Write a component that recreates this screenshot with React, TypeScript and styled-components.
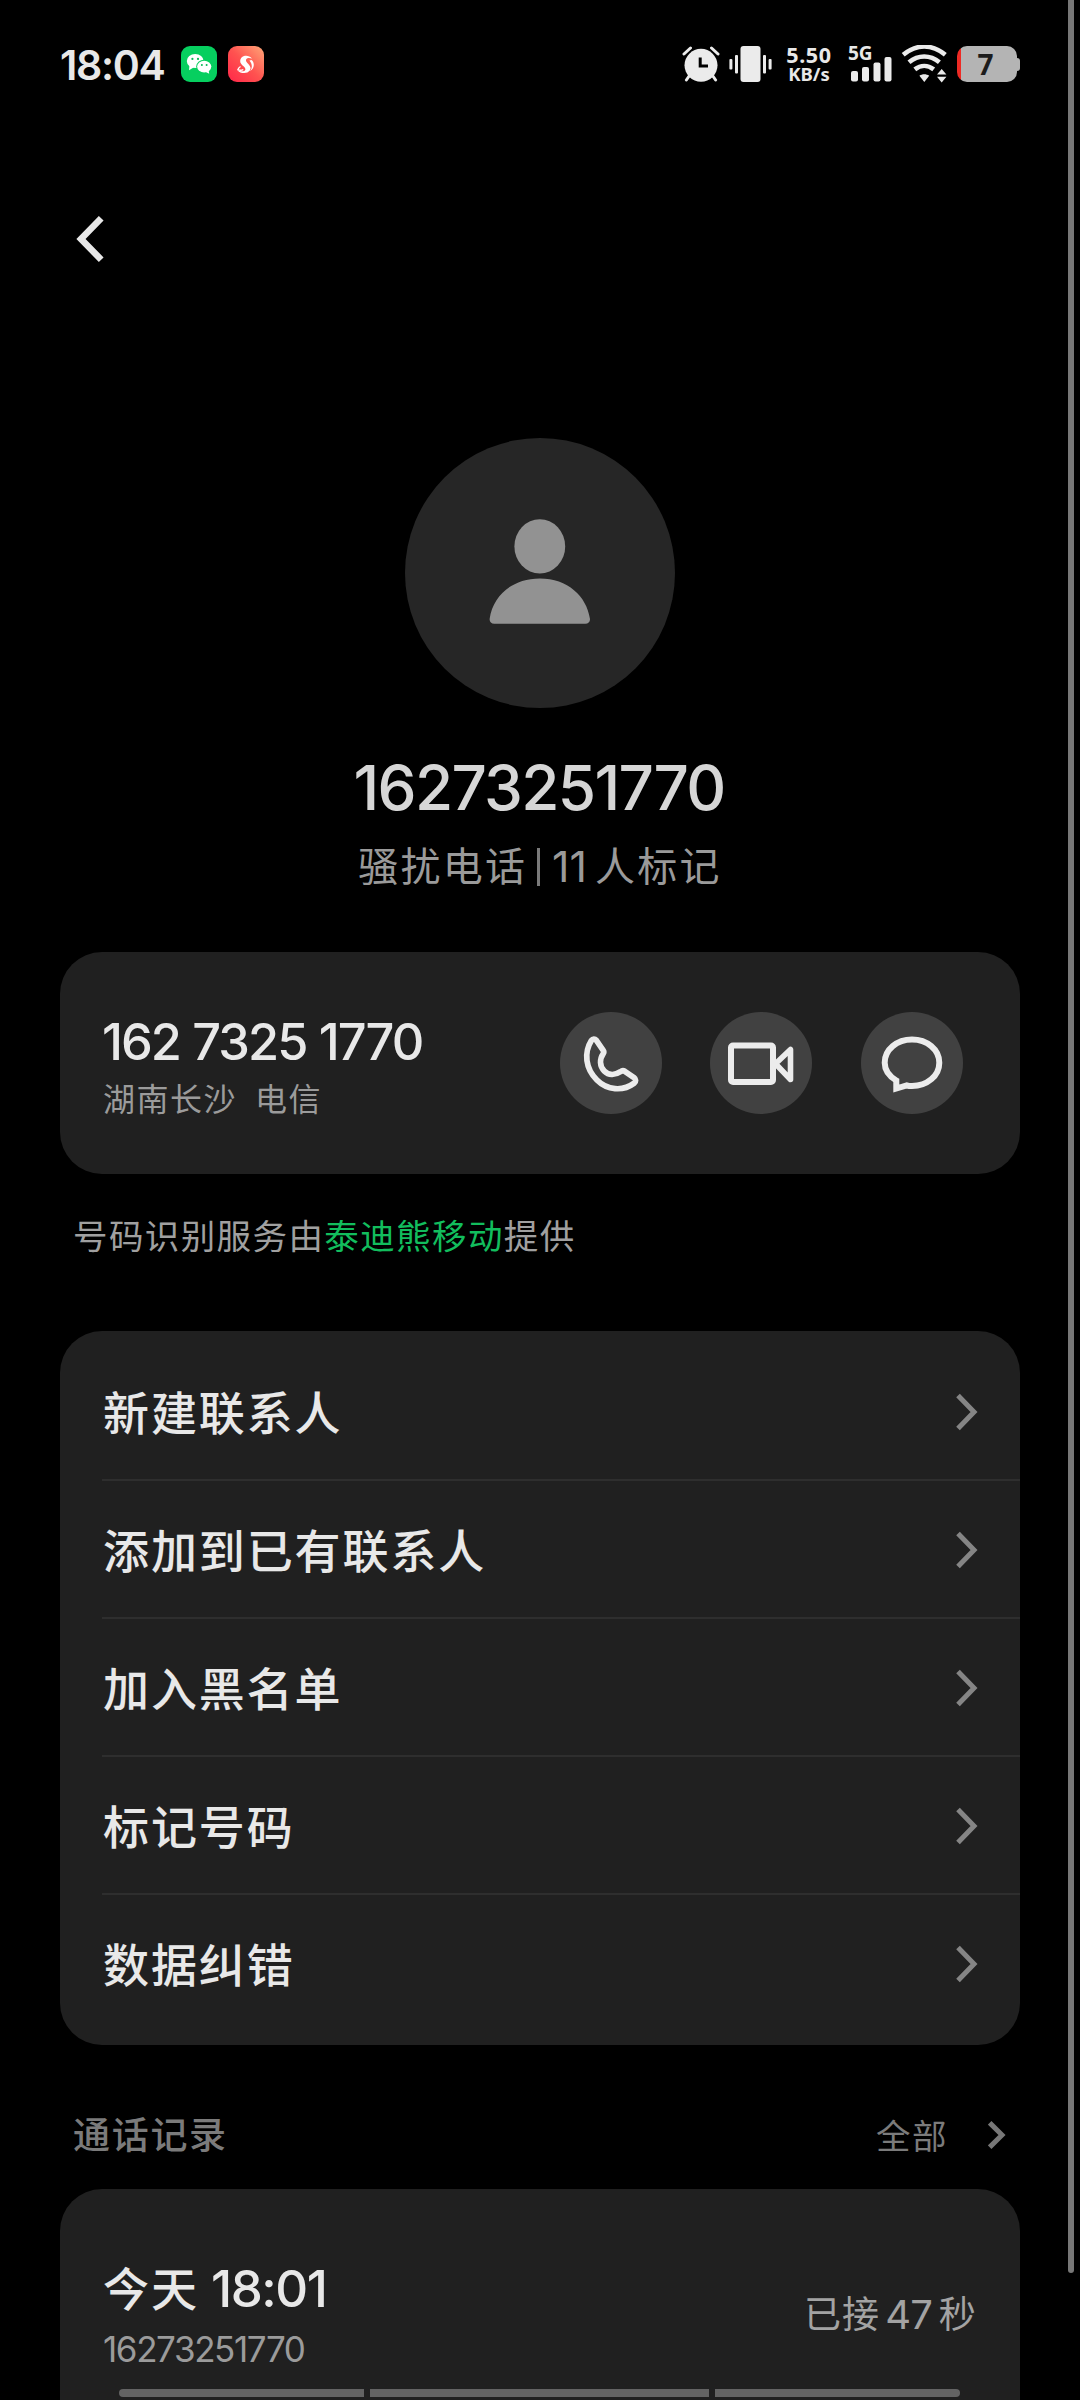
import React from "react";
import styled, { createGlobalStyle } from "styled-components";

const CJK = '"Noto Sans CJK SC", sans-serif';
const LATIN = 'Inter, "Noto Sans CJK SC", sans-serif';

const GlobalStyle = createGlobalStyle`
  * { box-sizing: border-box; }
  body { margin: 0; background: #000; }
`;

const Screen = styled.main`
  position: relative;
  width: 1080px;
  height: 2400px;
  overflow: hidden;
  display: flex;
  flex-direction: column;
  padding: 0 60px;
  background: #000;
  color: #e8e8e8;
  font-family: ${CJK};
`;

const Digits = styled.span<{ $size: number; $weight?: number; $track?: number; $margin?: string }>`
  display: inline-block;
  margin: ${(p) => p.$margin ?? "0"};
  font-family: ${LATIN};
  font-size: ${(p) => p.$size}px;
  font-weight: ${(p) => p.$weight ?? 400};
  letter-spacing: ${(p) => p.$track ?? 0}px;
  line-height: 1;
  vertical-align: -1px;
`;

/* ---------- status bar ---------- */

const StatusBar = styled.header`
  flex: none;
  height: 128px;
  display: flex;
  align-items: center;
  justify-content: space-between;
`;

const StatusGroup = styled.div`
  display: flex;
  align-items: center;
`;

const Clock = styled.div`
  width: 121px;
  padding-top: 2px;
  font: 600 41px/44px ${LATIN};
  letter-spacing: -1.3px;
  white-space: nowrap;
`;

const AppBadge = styled.div<{ $bg: string }>`
  width: 36px;
  height: 36px;
  margin-right: 11px;
  border-radius: 9px;
  background: ${(p) => p.$bg};
  svg { display: block; }
`;

const StatusIcon = styled.svg<{ $gap: number }>`
  display: block;
  margin-left: ${(p) => p.$gap}px;
`;

const NetSpeed = styled.div`
  width: 48px;
  margin-left: 13px;
  display: flex;
  flex-direction: column;
  align-items: center;
  padding-top: 1px;
  font-family: "Noto Sans", sans-serif;
  font-weight: 700;
  white-space: nowrap;
`;

const SpeedValue = styled.span`
  font-size: 21.5px;
  line-height: 19px;
  letter-spacing: 0.6px;
`;

const SpeedUnit = styled.span`
  font-size: 18.5px;
  line-height: 20px;
`;

const Cellular = styled.div`
  width: 43px;
  height: 36px;
  margin-left: 16px;
  position: relative;
`;

const CellularLabel = styled.span`
  position: absolute;
  left: -1px;
  top: -1px;
  font: 700 19px/16px "Noto Sans", sans-serif;
`;

const Battery = styled.div`
  position: relative;
  width: 60px;
  height: 36px;
  margin: 0 3px 0 10px;
  padding-right: 3px;
  border-radius: 10px;
  background: linear-gradient(90deg, #ee2a24 4px, #b4b4b4 4px);
  color: #1c1c1c;
  font: 700 28px/37px "Noto Sans", sans-serif;
  text-align: center;
  &::after {
    content: "";
    position: absolute;
    right: -3px;
    top: 12px;
    width: 4px;
    height: 13px;
    border-radius: 0 3px 3px 0;
    background: #b4b4b4;
  }
`;

/* ---------- profile ---------- */

const NavBar = styled.nav`
  flex: none;
  height: 222px;
  padding: 0 0 0 11px;
  display: flex;
  align-items: center;
`;

const IconButton = styled.button`
  display: block;
  padding: 0;
  border: 0;
  background: none;
  svg { display: block; }
`;

const Profile = styled.section`
  flex: none;
  display: flex;
  flex-direction: column;
  align-items: center;
  padding-top: 88px;
`;

const Avatar = styled.div`
  width: 270px;
  height: 270px;
  margin-right: 1px;
  border-radius: 50%;
  background: #262626;
`;

const Title = styled.h1`
  margin: 40px 2px 0 0;
  color: #d6d6d6;
  font: 500 62px/80px ${LATIN};
  letter-spacing: -1.7px;
`;

const Subtitle = styled.div`
  display: flex;
  align-items: center;
  height: 56px;
  margin-top: 8px;
  color: #9a9a9a;
  font-size: 40px;
  line-height: 56px;
  letter-spacing: 2.2px;
`;

const Divider = styled.i`
  width: 3px;
  height: 38px;
  margin: 5px 12px 0 10px;
  background: #7a7a7a;
`;

/* ---------- cards ---------- */

const Card = styled.section<{ $top: number; $height: number }>`
  flex: none;
  height: ${(p) => p.$height}px;
  margin-top: ${(p) => p.$top}px;
  border-radius: 42px;
  background: #202020;
  overflow: hidden;
`;

const NumberCard = styled(Card)`
  display: flex;
  align-items: center;
  justify-content: space-between;
  padding: 0 57.5px 0 42px;
`;

const Stack = styled.div`
  display: flex;
  flex-direction: column;
`;

const NumberStack = styled(Stack)`
  padding-top: 8px;
`;

const PhoneNumber = styled.div`
  font: 500 50.5px/60px ${LATIN};
  letter-spacing: -2px;
  word-spacing: 1px;
  white-space: nowrap;
`;

const Region = styled.div`
  display: flex;
  gap: 18px;
  padding-left: 1px;
  color: #9b9b9b;
  font-size: 32px;
  line-height: 50px;
  letter-spacing: 1.5px;
`;

const Actions = styled.div`
  display: flex;
  gap: 48.5px;
`;

const RoundButton = styled.button`
  width: 102px;
  height: 102px;
  padding: 0;
  border: 0;
  border-radius: 50%;
  background: #414141;
  svg { display: block; }
`;

const Provider = styled.p`
  flex: none;
  margin: 35px 0 0 13px;
  color: #a0a0a0;
  font-size: 34.5px;
  line-height: 50px;
  letter-spacing: 1.4px;
`;

const ProviderLink = styled.a`
  color: #12bd5d;
`;

const Menu = styled(Card)`
  padding: 10px 0 14px 42px;
  display: flex;
  flex-direction: column;
`;

const MenuItem = styled.div`
  flex: none;
  height: 138px;
  display: flex;
  align-items: center;
  justify-content: space-between;
  padding: 3px 42px 0 1px;
  font-size: 46px;
  font-weight: 500;
  letter-spacing: 1.9px;
  & + & {
    padding-top: 1px;
    border-top: 2px solid #2e2e2e;
  }
`;

const MenuLabel = styled.span`
  padding-bottom: 3px;
  line-height: 60px;
`;

const SectionHead = styled.div`
  flex: none;
  height: 60px;
  margin-top: 60px;
  padding: 0 14px 0 13px;
  display: flex;
  align-items: center;
  justify-content: space-between;
  color: #7b7b7b;
`;

const SectionTitle = styled.h2`
  margin: -4px 0 0;
  font-size: 37px;
  font-weight: 500;
  line-height: 56px;
  letter-spacing: 1.7px;
`;

const ShowAll = styled.div`
  display: flex;
  align-items: center;
  gap: 40px;
  font-size: 34.5px;
  letter-spacing: 1.5px;
`;

const ShowAllText = styled.span`
  padding-bottom: 3px;
  line-height: 52px;
`;

const LogCard = styled(Card)`
  padding: 65px 43px 0 43px;
  display: flex;
  align-items: flex-start;
  justify-content: space-between;
`;

const LogTime = styled.div`
  height: 64px;
  font-size: 46px;
  font-weight: 500;
  line-height: 64px;
  letter-spacing: 1.9px;
  white-space: nowrap;
`;

const LogNumber = styled.div`
  margin-top: 8px;
  color: #9b9b9b;
  font: 400 35px/46px ${LATIN};
  letter-spacing: -1.4px;
`;

const Duration = styled.div`
  margin-top: 26px;
  height: 64px;
  color: #a3a3a3;
  font-size: 37px;
  line-height: 64px;
  letter-spacing: 1.2px;
  white-space: nowrap;
`;

/* ---------- overlays ---------- */

const ScrollThumb = styled.div`
  position: absolute;
  top: 0;
  right: 6px;
  width: 6px;
  height: 2273px;
  border-radius: 0 0 3px 3px;
  background: #777;
`;

const GestureBar = styled.div`
  position: absolute;
  left: 119px;
  right: 120px;
  bottom: 3px;
  height: 8px;
  display: grid;
  grid-template-columns: 245px 339px 245px;
  gap: 6px;
  border-radius: 4px;
  overflow: hidden;
  i { background: #636363; }
`;

/* ---------- icons ---------- */

const ChevronRight = ({ small }: { small?: boolean }) =>
  small ? (
    <svg width="18" height="30" viewBox="0 0 18 30" fill="none" stroke="#777" strokeWidth="5">
      <path d="M1.7 2.8 14 15 1.7 27.2" />
    </svg>
  ) : (
    <svg width="22" height="38" viewBox="0 0 22 38" fill="none" stroke="#858585" strokeWidth="5">
      <path d="M2 2.6 18 19 2 35.4" />
    </svg>
  );

const WeChatIcon = () => (
  <svg width="36" height="36" viewBox="0 0 36 36">
    <g fill="#fff">
      <ellipse cx="14.2" cy="15" rx="8.4" ry="7" />
      <path d="M8.5 19 8 24.2l5-3z" />
    </g>
    <ellipse cx="23.2" cy="20.6" rx="8" ry="6.8" fill="#06cf5f" />
    <ellipse cx="23.2" cy="20.6" rx="7.1" ry="5.9" fill="#fff" />
    <path d="m27.6 24 .6 3.8-4-2z" fill="#fff" />
    <g fill="#06b855">
      <circle cx="11.4" cy="12.9" r="1.1" />
      <circle cx="17" cy="12.9" r="1.1" />
      <circle cx="20.9" cy="18.9" r="1" />
      <circle cx="25.6" cy="18.9" r="1" />
    </g>
  </svg>
);

const SwirlIcon = () => (
  <svg width="36" height="36" viewBox="0 0 36 36" fill="none">
    <path d="M24 12.5C20 8 12.5 9.5 12.2 15c-.2 4 5.6 5.6 5.2 8.4-.3 2-4.4 2.6-8 .8 3 3.6 9.8 4 12.4.4 3.6-5-5.6-8-3.6-11.4 1-1.6 3.6-1.6 5.8-.7z" fill="#fff" />
    <path d="M21.5 14.5c2.2 3 3.7 6.5.5 10.7 4.6-2.5 5-8.7 1.5-11.2z" fill="#fff" />
    <path d="M12.5 20.5c-1.5 1-2.3 2-2.6 3.2 1.8.7 4 .7 5.4-.2" stroke="#fff" strokeWidth="1.4" />
  </svg>
);

const AlarmIcon = () => (
  <StatusIcon $gap={0} width="38" height="36" viewBox="0 0 38 36">
    <g stroke="#ebebeb" strokeWidth="3" strokeLinecap="round">
      <path d="M2 8 8.5 2M36 8 29.5 2M7.5 29.5 4.4 34M30.5 29.5l3.1 4.5" />
    </g>
    <circle cx="19" cy="19.3" r="16.5" fill="#ebebeb" />
    <path d="M18.2 11.5v8.6H26" fill="none" stroke="#000" strokeWidth="3" />
  </StatusIcon>
);

const VibrateIcon = () => (
  <StatusIcon $gap={9} width="43" height="36" viewBox="0 0 43 36" fill="#ebebeb">
    <rect x="11.5" y="0" width="20" height="36" rx="3" />
    <rect x="6" y="9" width="3" height="18.5" rx="1" />
    <rect x="0.4" y="13" width="3" height="10.5" rx="1" />
    <rect x="34" y="9" width="3" height="18.5" rx="1" />
    <rect x="39.6" y="13" width="3" height="10.5" rx="1" />
  </StatusIcon>
);

const SignalBars = () => (
  <svg width="43" height="36" viewBox="0 0 43 36" fill="#ebebeb">
    <rect x="2" y="25" width="7" height="10.5" rx="2" />
    <rect x="13" y="21" width="7" height="14.5" rx="2" />
    <rect x="24.5" y="16.5" width="7" height="19" rx="2" />
    <rect x="35.5" y="11" width="7" height="24.5" rx="2" />
  </svg>
);

const WifiIcon = () => (
  <StatusIcon $gap={9} width="46" height="38" viewBox="0 0 46 38">
    <g fill="none" stroke="#ebebeb" strokeWidth="4.6">
      <path d="M2.2 9.8C15.5-1.2 31-1.2 44.3 9.8" />
      <path d="M8 17.3c9.3-7.8 21.1-7.8 30.4 0" />
      <path d="M13.8 24.4c5.9-4.6 13-4.6 18.9 0" />
    </g>
    <path d="M18.4 30.8c2.8-2 7-2 9.8 0L23.3 37z" fill="#ebebeb" />
    <path d="M36 29.5h9.4L40.7 24zM36 31.8h9.4L40.7 37.4z" fill="#ebebeb" />
  </StatusIcon>
);

const PersonIcon = () => (
  <svg width="270" height="270" viewBox="0 0 270 270" fill="#929292">
    <ellipse cx="134.8" cy="108.4" rx="25.4" ry="27.1" />
    <path d="M89.2 185.8c-3 0-5-2.2-4.5-5.2C88 158 107 140.4 134.8 140.4S181.6 158 184.9 180.6c.5 3-1.5 5.2-4.5 5.2z" />
  </svg>
);

const PhoneIcon = () => (
  <svg width="102" height="102" viewBox="0 0 102 102" fill="none" stroke="#ececec" strokeWidth="5.7" strokeLinejoin="round">
    <path d="M31.5 28.3c1.2-1.7 3.4-1.7 4.7-.2l7 10.2c.9 1.3.8 2.1.1 3.2-4 6-3.6 12.7.9 17.5 4.4 4.5 10.5 4.6 16.3.7 1.8-1.4 2.5-1.5 4.3-.4l9.2 6.3c2.1 1.6 2.2 4 .2 5.5-11.5 8.6-27 7.2-37.3-3.1C25.5 56.7 23.6 40.9 31.5 28.3z" />
  </svg>
);

const VideoIcon = () => (
  <svg width="102" height="102" viewBox="0 0 102 102" fill="none" stroke="#ececec" strokeWidth="6" strokeLinejoin="round">
    <rect x="21" y="33.5" width="42" height="36.5" rx="2" />
    <path d="M65.500 51.700 80.500 37.500v30z" strokeWidth="5.6" />
  </svg>
);

const MessageIcon = () => (
  <svg width="102" height="102" viewBox="0 0 102 102">
    <path
      fill="none"
      stroke="#ececec"
      strokeWidth="6"
      d="M35.3 76.5V68.5C28 64 23.7 58 23.7 50.7 23.7 37.5 36 27.5 51 27.500S78.300 37.500 78.300 50.700 66 74 51 74c-2 0-3.500-.100-5.300-.700z"
    />
  </svg>
);

const menu = ["新建联系人", "添加到已有联系人", "加入黑名单", "标记号码", "数据纠错"];

export default function App() {
  return (
    <>
      <GlobalStyle />
      <Screen>
        <StatusBar>
          <StatusGroup>
            <Clock>18:04</Clock>
            <AppBadge $bg="#06cf5f"><WeChatIcon /></AppBadge>
            <AppBadge $bg="linear-gradient(45deg, #ff2f4a 10%, #ff5350 50%, #ffa878)"><SwirlIcon /></AppBadge>
          </StatusGroup>
          <StatusGroup>
            <AlarmIcon />
            <VibrateIcon />
            <NetSpeed>
              <SpeedValue>5.50</SpeedValue>
              <SpeedUnit>KB/s</SpeedUnit>
            </NetSpeed>
            <Cellular>
              <CellularLabel>5G</CellularLabel>
              <SignalBars />
            </Cellular>
            <WifiIcon />
            <Battery>7</Battery>
          </StatusGroup>
        </StatusBar>

        <NavBar>
          <IconButton aria-label="返回">
            <svg width="36" height="50" viewBox="0 0 36 50" fill="none" stroke="#e8e8e8" strokeWidth="6.6">
              <path d="M30.2 4.3 10 25 30.2 45.7" />
            </svg>
          </IconButton>
        </NavBar>

        <Profile>
          <Avatar><PersonIcon /></Avatar>
          <Title>16273251770</Title>
          <Subtitle>
            <span>骚扰电话</span>
            <Divider />
            <Digits $size={43} $margin="4px 8px 0 0">11</Digits>
            <span>人标记</span>
          </Subtitle>
        </Profile>

        <NumberCard $top={60} $height={222}>
          <NumberStack>
            <PhoneNumber>162 7325 1770</PhoneNumber>
            <Region>
              <span>湖南长沙</span>
              <span>电信</span>
            </Region>
          </NumberStack>
          <Actions>
            <RoundButton aria-label="电话"><PhoneIcon /></RoundButton>
            <RoundButton aria-label="视频"><VideoIcon /></RoundButton>
            <RoundButton aria-label="短信"><MessageIcon /></RoundButton>
          </Actions>
        </NumberCard>

        <Provider>
          号码识别服务由<ProviderLink>泰迪熊移动</ProviderLink>提供
        </Provider>

        <Menu $top={72} $height={714}>
          {menu.map((label) => (
            <MenuItem key={label}>
              <MenuLabel>{label}</MenuLabel>
              <ChevronRight />
            </MenuItem>
          ))}
        </Menu>

        <SectionHead>
          <SectionTitle>通话记录</SectionTitle>
          <ShowAll>
            <ShowAllText>全部</ShowAllText>
            <ChevronRight small />
          </ShowAll>
        </SectionHead>

        <LogCard $top={24} $height={320}>
          <Stack>
            <LogTime>
              今天 <Digits $size={51} $weight={500} $track={-1.5}>18:01</Digits>
            </LogTime>
            <LogNumber>16273251770</LogNumber>
          </Stack>
          <Duration>
            已接<Digits $size={40} $track={-1} $margin="0 7px 0 5px">47</Digits>秒
          </Duration>
        </LogCard>

        <ScrollThumb />
        <GestureBar><i /><i /><i /></GestureBar>
      </Screen>
    </>
  );
}
